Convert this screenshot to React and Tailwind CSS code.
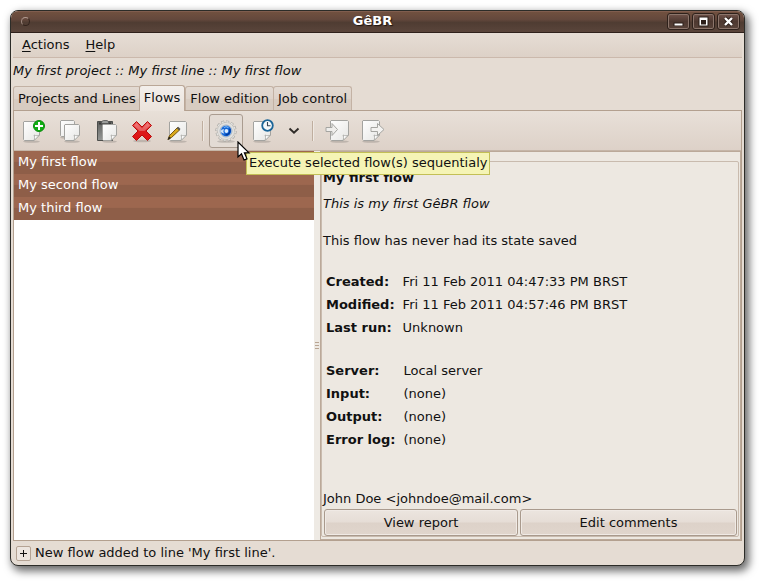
import React from "react";

const Paper = ({ x = 3, y = 2, w = 17, h = 19 }) => (
  <g>
    <ellipse cx={x + w / 2} cy={y + h + 0.6} rx={w / 2} ry="1.2" fill="#000" opacity="0.15" />
    <path
      d={`M${x + 1} ${y + 0.5}H${x + w - 1.5}L${x + w - 0.5} ${y + 1.5}V${y + h - 6}L${x + w - 6} ${y + h - 0.5}H${x + 1.5}L${x + 0.5} ${y + h - 1.5}V${y + 1}Z`}
      fill="url(#paper)"
      stroke="#a3a3a0"
    />
    <path
      d={`M${x + w - 6} ${y + h - 0.5}C${x + w - 5} ${y + h - 2.5} ${x + w - 5.5} ${y + h - 5} ${x + w - 6} ${y + h - 6}C${x + w - 4} ${y + h - 5} ${x + w - 2} ${y + h - 5} ${x + w - 0.5} ${y + h - 6}Z`}
      fill="#fff"
      stroke="#a3a3a0"
      strokeWidth="0.8"
    />
  </g>
);

const Icon = ({ children }) => (
  <svg width="24" height="24" viewBox="0 0 24 24" aria-hidden="true" className="block shrink-0">
    {children}
  </svg>
);

const NewIcon = () => (
  <Icon>
    <Paper x={1} y={2} w={17} h={20} />
    <circle cx="17" cy="7" r="5.5" fill="#0fae12" stroke="#0b8a0d" />
    <path d="M17 3V11M13 7H21" stroke="#fff" strokeWidth="2" />
  </Icon>
);

const CopyIcon = () => (
  <Icon>
    <Paper x={2} y={1} w={15} h={17} />
    <Paper x={6} y={5} w={16} h={17} />
  </Icon>
);

const PasteIcon = () => (
  <Icon>
    <path d="M3.5 2.5H18.5V21.5H3.5Z" fill="url(#board)" stroke="#4d4f4d" />
    <path d="M5 4.5H17" stroke="#3a3b3a" strokeWidth="2" />
    <path d="M7.5 4.5V2.5L9.5 1.5H13L14.5 2.5V4.5Z" fill="#9a9c9a" stroke="#555" strokeWidth="0.8" />
    <Paper x={8} y={5} w={15} h={17} />
  </Icon>
);

const DeleteIcon = () => (
  <Icon>
    <ellipse cx="12" cy="22" rx="9" ry="1.3" fill="#000" opacity="0.15" />
    <path
      d="M6.5 2.5L12 8L17.5 2.5L21.5 6.5L16 12L21.5 17.5L17.5 21.5L12 16L6.5 21.5L2.5 17.5L8 12L2.5 6.5Z"
      fill="url(#red)"
      stroke="#b80c0c"
      strokeLinejoin="round"
    />
    <path d="M6.5 4L12 9.5L17.5 4L20 6.5L14.5 12H9.5L4 6.5Z" fill="#fff" opacity="0.25" />
  </Icon>
);

const EditIcon = () => (
  <Icon>
    <Paper x={3} y={2} w={18} h={20} />
    <path d="M2 20.5L3.5 16.5L11.5 8.5L13.8 10.8L5.5 18.5Z" fill="#d9a91c" stroke="#6a4c08" strokeWidth="0.9" />
    <path d="M11.5 8.5L13.8 10.8" stroke="#555" strokeWidth="2" />
    <path d="M1.5 21L3 17.5L5 19Z" fill="#222" />
  </Icon>
);

const ExecuteIcon = () => (
  <Icon>
    <ellipse cx="12" cy="22.5" rx="9" ry="1.3" fill="#000" opacity="0.15" />
    <circle cx="12" cy="12" r="9.3" fill="none" stroke="#a5a39e" strokeWidth="2.6" strokeDasharray="2.9 1.95" />
    <circle cx="12" cy="12" r="8.7" fill="#e2e1de" stroke="#b8b6b1" strokeWidth="0.7" />
    <circle cx="12" cy="12" r="9.3" fill="none" stroke="#e6e5e2" strokeWidth="1.4" strokeDasharray="2.3 2.55" strokeDashoffset="-0.3" />
    <circle cx="12" cy="12" r="6" fill="#cfe2f6" stroke="#98a7b8" strokeWidth="0.8" />
    <path
      d="M12.2 6.8C15.6 6.8 17.4 9.4 17.2 12.2C17 15.2 14.6 17.2 12 17.2C9.3 17.2 7.3 15.4 7 13C8 14 9.2 14.6 10.4 14.3C9.2 13.2 9 11.4 10.2 10.4C9 10.2 7.8 10.6 7 11.6C7.2 8.8 9.3 6.8 12.2 6.8Z"
      fill="#1466d6"
    />
    <path d="M15.8 9.8C16.6 12.5 15.2 15.6 11.5 16" fill="none" stroke="#04399c" strokeWidth="1.4" />
    <circle cx="12.4" cy="12" r="1.9" fill="#dceeff" />
    <path d="M10 8.6C11.4 7.6 13.4 7.8 14.4 9" stroke="#7cbcf8" strokeWidth="1.1" fill="none" />
  </Icon>
);

const ScheduleIcon = () => (
  <Icon>
    <Paper x={2} y={2} w={18} h={20} />
    <circle cx="16.5" cy="6.5" r="5.3" fill="#f3f8fb" stroke="#1b6598" strokeWidth="1.8" />
    <path d="M16.5 3V6.8H19.5" stroke="#345" strokeWidth="1.1" fill="none" />
  </Icon>
);

const ImportIcon = () => (
  <Icon>
    <Paper x={5} y={1} w={19} h={21} />
    <path d="M1 8.5H7V4.5L12.5 10.5L7 16.5V12.5H1Z" fill="#efeeec" stroke="#a5a5a1" />
  </Icon>
);

const ExportIcon = () => (
  <Icon>
    <Paper x={1} y={1} w={18} h={21} />
    <path d="M10 8.5H16.5V4.5L23 10.5L16.5 16.5V12.5H10Z" fill="#f3f2f0" stroke="#a5a5a1" />
  </Icon>
);

const ToolButton = ({ label, children }) => (
  <button type="button" aria-label={label} className="flex h-9 w-9 shrink-0 items-center justify-center">
    {children}
  </button>
);

const Separator = () => (
  <span className="h-5 w-0.5 shrink-0 border-l border-r border-l-[#bfae9f] border-r-[#efe9e3]" />
);

const Mnemonic = ({ first, rest }) => (
  <button type="button" className="px-2">
    <span className="underline underline-offset-2">{first}</span>
    {rest}
  </button>
);

const WindowButton = ({ label, children }) => (
  <button
    type="button"
    aria-label={label}
    className="flex h-[17px] w-[23px] items-center justify-center rounded-[3px] border border-[#2e211b] bg-gradient-to-b from-[#70534a] via-[#4d3830] to-[#58433a] shadow-[inset_0_0_0_1px_#8b756b]"
  >
    <svg width="11" height="11" viewBox="0 0 11 11" aria-hidden="true">
      {children}
    </svg>
  </button>
);

const tabs = ["Projects and Lines", "Flows", "Flow edition", "Job control"];
const flows = ["My first flow", "My second flow", "My third flow"];
const dates = [
  ["Created:", "Fri 11 Feb 2011 04:47:33 PM BRST"],
  ["Modified:", "Fri 11 Feb 2011 04:57:46 PM BRST"],
  ["Last run:", "Unknown"],
];
const io = [
  ["Server:", "Local server"],
  ["Input:", "(none)"],
  ["Output:", "(none)"],
  ["Error log:", "(none)"],
];

const Facts = ({ rows, className }) => (
  <table className={`ml-[3px] self-start border-collapse text-left ${className}`}>
    <tbody>
      {rows.map(([name, value]) => (
        <tr key={name} className="h-[23px]">
          <th scope="row" className="p-0 pr-2 font-bold">{name}</th>
          <td className="p-0">{value}</td>
        </tr>
      ))}
    </tbody>
  </table>
);

const PanelButton = ({ children, className }) => (
  <button
    type="button"
    className={`h-[27px] rounded-[3px] border border-[#a99a8d] bg-[linear-gradient(#ece5df,#e6ddd6_48%,#ddd2c9_52%,#e0d5cc)] shadow-[inset_0_0_0_1px_#f0eae5] ${className}`}
  >
    {children}
  </button>
);

export default function App() {
  return (
    <div className="flex min-h-screen flex-col bg-white pt-2.5 pr-[17px] pb-[17px] pl-2.5 font-['DejaVu_Sans',sans-serif] text-[13px] leading-5 text-[#111]">
      <svg width="0" height="0" className="absolute" aria-hidden="true">
        <defs>
          <linearGradient id="paper" x1="0" y1="0" x2="1" y2="1">
            <stop offset="0" stopColor="#ffffff" />
            <stop offset="1" stopColor="#e6e6e4" />
          </linearGradient>
          <linearGradient id="board" x1="0" y1="0" x2="0" y2="1">
            <stop offset="0" stopColor="#5f615f" />
            <stop offset="1" stopColor="#969896" />
          </linearGradient>
          <linearGradient id="red" x1="0" y1="0" x2="0" y2="1">
            <stop offset="0" stopColor="#ee5a5a" />
            <stop offset="0.5" stopColor="#dc1c1c" />
            <stop offset="1" stopColor="#e01212" />
          </linearGradient>
        </defs>
      </svg>

      <div className="flex flex-1 flex-col rounded-lg border border-[#2c2c28] bg-[#e5dcd3] shadow-[3px_4px_9px_1px_rgba(0,0,0,0.6)]">
        <header className="flex h-[22px] items-center justify-between rounded-t-[7px] border-b border-[#2f211b] bg-[linear-gradient(#8a6658,#70503f_6%,#64483c_40%,#4f3c32_55%,#5a453b)] pr-1 pl-2.5">
          <button type="button" aria-label="Window menu" className="h-[9px] w-[9px] rounded-full border border-[#33241d] border-t-[#b39d93] border-l-[#a08a80]" />
          <h1 className="pb-0.5 pl-12 font-bold text-white [text-shadow:1px_1px_1px_#1c120d]">GêBR</h1>
          <div className="flex gap-0.5">
            <WindowButton label="Minimize">
              <path d="M0.5 6.5H10.5V10H0.5Z" fill="#2b1e19" />
              <path d="M1.5 7.5H9.5V9.5H1.5Z" fill="#fff" />
            </WindowButton>
            <WindowButton label="Maximize">
              <path d="M0.5 0.5H10.5V10.5H0.5Z" fill="#2b1e19" />
              <path d="M1.5 1.5H9.5V9.5H1.5ZM3 4V8.5H8V4Z" fill="#fff" fillRule="evenodd" />
            </WindowButton>
            <WindowButton label="Close">
              <path d="M2 2L9 9M9 2L2 9" stroke="#2b1e19" strokeWidth="4" />
              <path d="M2 2L9 9M9 2L2 9" stroke="#fff" strokeWidth="2.4" />
            </WindowButton>
          </div>
        </header>

        <nav className="mx-0.5 flex h-[25px] items-center border-b border-[#cbb9ac] bg-gradient-to-b from-[#e6ddd5] to-[#ddd1c7] pl-px">
          <Mnemonic first="A" rest="ctions" />
          <Mnemonic first="H" rest="elp" />
        </nav>

        <div className="flex h-[27px] items-center pb-px pl-0.5 italic">
          My first project :: My first line :: My first flow
        </div>

        <div role="tablist" className="ml-0.5 flex h-[25px] items-end">
          {tabs.map((tab) =>
            tab === "Flows" ? (
              <button key={tab} type="button" role="tab" aria-selected="true" className="relative -mb-px -ml-px flex h-[26px] items-center rounded-t-[3px] border border-b-0 border-[#baa797] bg-gradient-to-b from-[#f3efeb] to-[#ebe3dc] px-1 pb-0.5">
                {tab}
              </button>
            ) : (
              <button key={tab} type="button" role="tab" aria-selected="false" className="-mr-px flex h-6 items-center rounded-t-[3px] border border-b-0 border-[#c3b2a4] bg-[linear-gradient(#e3dad2,#ded3ca_50%,#d8ccc1_52%,#d8ccc1)] px-1">
                {tab}
              </button>
            )
          )}
        </div>

        <main className="mr-0.5 ml-0.5 flex flex-1 flex-col border border-[#b3a08f]">
          <div role="toolbar" className="flex h-10 items-center border-b border-[#c5b5a7] bg-gradient-to-b from-[#e8e0d8] to-[#ddd1c8] pl-0.5">
            <ToolButton label="New flow"><NewIcon /></ToolButton>
            <ToolButton label="Copy"><CopyIcon /></ToolButton>
            <ToolButton label="Paste"><PasteIcon /></ToolButton>
            <ToolButton label="Delete"><DeleteIcon /></ToolButton>
            <ToolButton label="Edit"><EditIcon /></ToolButton>
            <span className="flex w-[13px] justify-center"><Separator /></span>
            <div className="relative">
              <button
                type="button"
                aria-label="Execute"
                aria-describedby="execute-tip"
                className="flex h-[34px] w-[34px] items-center justify-center rounded-[3px] border border-[#aa9c90] bg-[#e3dbd4]"
              >
                <ExecuteIcon />
              </button>
              <div id="execute-tip" role="tooltip" className="absolute top-[38px] left-[37px] z-10 h-[23px] border border-[#c3bf55] bg-[#f5f4b5] px-0.5 whitespace-nowrap">
                Execute selected flow(s) sequentialy
              </div>
              <svg width="14" height="21" viewBox="0 0 14 21" aria-hidden="true" className="absolute top-[27px] left-7 z-20">
                <path d="M1 1V16L4.5 12.8L7 19L10 17.8L7.4 11.8H12Z" fill="#fff" stroke="#000" strokeWidth="1.2" />
              </svg>
            </div>
            <span className="ml-0.5 flex"><ToolButton label="Schedule"><ScheduleIcon /></ToolButton></span>
            <button type="button" aria-label="Schedule options" className="flex h-9 w-[26px] items-center justify-center">
              <svg width="12" height="8" viewBox="0 0 12 8" aria-hidden="true">
                <path d="M1.5 1.5L6 5.8L10.5 1.5" fill="none" stroke="#2f2b28" strokeWidth="1.9" />
              </svg>
            </button>
            <span className="flex w-3 justify-center"><Separator /></span>
            <ToolButton label="Import"><ImportIcon /></ToolButton>
            <ToolButton label="Export"><ExportIcon /></ToolButton>
          </div>

          <div className="flex flex-1">
            <ul className="w-[300px] shrink-0 bg-white text-white">
              {flows.map((flow) => (
                <li key={flow} className="h-[23px] bg-[linear-gradient(#9d674f_45%,#8e5e48_50%)] pl-1 leading-[22px]">{flow}</li>
              ))}
            </ul>
            <div className="flex w-1.5 shrink-0 flex-col items-center justify-center gap-0.5 bg-[#eeeae4]">
              <span className="h-px w-1 bg-[#b9a593]" />
              <span className="h-px w-1 bg-[#b9a593]" />
              <span className="h-px w-1 bg-[#b9a593]" />
            </div>
            <section className="flex flex-1 flex-col border border-[#bba999] bg-[#ede8e1] pt-[9px] pr-px pb-0.5">
              <div className="flex flex-1 flex-col rounded-[2px] border border-[#c9bbae] px-px pt-1">
                <h2 className="pt-0.5 font-bold">My first flow</h2>
                <p className="mt-1.5 italic">This is my first GêBR flow</p>
                <p className="mt-[17px]">This flow has never had its state saved</p>
                <Facts rows={dates} className="mt-[19px]" />
                <Facts rows={io} className="mt-5" />
                <p className="mt-auto">John Doe &lt;johndoe@mail.com&gt;</p>
                <div className="flex gap-0.5 pl-px">
                  <PanelButton className="w-[194px]">View report</PanelButton>
                  <PanelButton className="flex-1">Edit comments</PanelButton>
                </div>
              </div>
            </section>
          </div>
        </main>

        <footer className="flex h-6 items-center gap-1 pl-[5px]">
          <button type="button" aria-label="Show messages" className="flex h-[15px] w-[15px] items-center justify-center rounded-[2px] border border-[#b5a394] bg-[#ece5df]">
            <svg width="7" height="7" viewBox="0 0 7 7" aria-hidden="true">
              <path d="M3.5 0V7M0 3.5H7" stroke="#111" />
            </svg>
          </button>
          <span>New flow added to line 'My first line'.</span>
        </footer>
      </div>
    </div>
  );
}
